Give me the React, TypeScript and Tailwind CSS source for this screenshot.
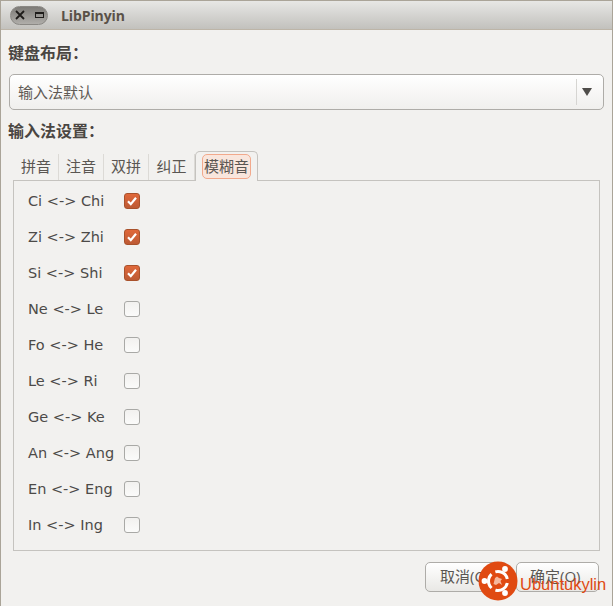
const CJK = "font-['Open_Sans','Noto_Sans_CJK_SC',sans-serif]";

const rows: [string, boolean][] = [
  ["Ci <-> Chi", true],
  ["Zi <-> Zhi", true],
  ["Si <-> Shi", true],
  ["Ne <-> Le", false],
  ["Fo <-> He", false],
  ["Le <-> Ri", false],
  ["Ge <-> Ke", false],
  ["An <-> Ang", false],
  ["En <-> Eng", false],
  ["In <-> Ing", false],
];

function Check({ on }: { on: boolean }) {
  if (on) {
    return (
      <div className="w-4 h-4 rounded-[3px] border border-[#a9512b] bg-gradient-to-b from-[#e0683a] to-[#bd5a34] flex items-center justify-center">
        <svg width="12" height="12" viewBox="0 0 12 12">
          <path d="M2 6.2 L4.8 9.2 L10 2.8" fill="none" stroke="#fff" strokeWidth="2.2" />
        </svg>
      </div>
    );
  }
  return <div className="w-4 h-4 rounded-[3px] border border-[#a9a9a6] bg-gradient-to-b from-[#f2f1ef] to-[#fbfbfa]" />;
}

function Tab({ label, w }: { label: string; w: string }) {
  return (
    <div className={`${w} h-[26px] pb-[2px] flex items-center justify-center border-r border-[#dcdad6] text-[15px] text-[#5a5652]`}>
      {label}
    </div>
  );
}

function Logo() {
  return (
    <svg width="40" height="40" viewBox="0 0 40 40">
      <circle cx="20" cy="20" r="19.5" fill="#e04a12" />
      <circle cx="20" cy="20" r="9.5" fill="none" stroke="#fff" strokeWidth="3" strokeDasharray="15.5 4.4" transform="rotate(12 20 20)" />
      <circle cx="6.5" cy="20" r="2.9" fill="#fff" />
      <circle cx="27" cy="8" r="2.9" fill="#fff" />
      <circle cx="27" cy="32" r="2.9" fill="#fff" />
      <path d="M15.5 23 L17 17 L19 15.5 L21 17 L24 18 L22.5 20 L24 24 L21 22 L18 24 Z" fill="#f5b79c" />
    </svg>
  );
}

export default function App() {
  return (
    <div className={`relative w-[613px] h-[606px] overflow-hidden flex flex-col bg-[#f2f1ef] border-l border-t border-r border-[#aaa498] ${CJK}`}>
      <div className="h-[29px] shrink-0 flex items-center bg-gradient-to-b from-[#e7e7e5] to-[#c2c1bd] border-b border-[#bdb5a8]">
        <div className="ml-[9px] w-[38px] h-[19px] rounded-full bg-gradient-to-b from-[#7d7b77] to-[#b0aeaa] border border-[#8a8884] flex items-center justify-between pl-[4px] pr-[3px]">
          <svg width="10" height="10" viewBox="0 0 10 10">
            <path d="M1 1 L9 9 M9 1 L1 9" stroke="#1e1c1a" strokeWidth="1.8" />
          </svg>
          <div className="w-[9px] h-[6px] border border-[#1e1c1a] border-t-2" />
        </div>
        <span className="ml-[13px] text-[14px] font-bold text-[#5a5148] tracking-[-0.1px]">LibPinyin</span>
      </div>

      <div className="flex-1 flex flex-col px-[7px]">
        <div className="mt-[11px] h-[24px] flex items-center text-[16px] font-bold text-[#4a4642]">键盘布局：</div>

        <div className="mt-[9px] ml-[1px] h-[36px] w-[595px] rounded-[5px] border border-[#aeaca8] bg-gradient-to-b from-[#ffffff] to-[#f0efed] flex items-center">
          <span className="ml-[8px] flex-1 text-[15px] text-[#5f5a55]">输入法默认</span>
          <div className="w-px h-[26px] bg-[#d6d5d2]" />
          <svg className="ml-[5px] mr-[11px]" width="10" height="8" viewBox="0 0 10 8">
            <path d="M0 0 H10 L5 8 Z" fill="#4f4d4a" />
          </svg>
        </div>

        <div className="mt-[9px] h-[24px] flex items-center text-[16px] font-bold text-[#4a4642]">输入法设置：</div>

        <div className="mt-[8px] ml-[6px] h-[29px] flex items-end relative z-10">
          <Tab label="拼音" w="w-[45px]" />
          <Tab label="注音" w="w-[45px]" />
          <Tab label="双拼" w="w-[45px]" />
          <Tab label="纠正" w="w-[46px]" />
          <div className="w-[63px] h-[30px] -mb-px rounded-t-[5px] border border-b-0 border-[#c5c3bf] bg-[#f2f1ef] flex items-center pl-[6px]">
            <div className="w-[49px] h-[25px] rounded-[5px] border border-[#f2a98c] bg-[#f9e6dd] flex items-center justify-center text-[15px] text-[#5a5652]">
              模糊音
            </div>
          </div>
        </div>

        <div className="ml-[5px] w-[587px] h-[371px] border border-[#c5c3bf] bg-[#f2f1ef] flex flex-col pt-[2px] pl-[14px]">
          {rows.map(([label, on]) => (
            <div key={label} className="h-[36px] flex items-center">
              <span className="w-[96px] pt-px text-[14.5px] text-[#4c4a48] font-['DejaVu_Sans',sans-serif]">{label}</span>
              <Check on={on} />
            </div>
          ))}
        </div>

        <div className="mt-[11px] flex gap-[8px] ml-[417px]">
          <div className="w-[83px] h-[30px] pb-[2px] rounded-[5px] border border-[#aeaca8] bg-gradient-to-b from-[#ffffff] to-[#e9e8e5] flex items-center pl-[14px] text-[15px] text-[#5a5652]">
            取消(C)
          </div>
          <div className="w-[83px] h-[30px] pb-[2px] rounded-[5px] border border-[#aeaca8] bg-gradient-to-b from-[#ffffff] to-[#e9e8e5] flex items-center pl-[13px] text-[15px] text-[#5a5652]">
            确定(O)
          </div>
        </div>
      </div>

      <div className="absolute left-[477px] top-[560px]">
        <Logo />
      </div>
      <span className="absolute left-[519px] top-[572px] text-[16.5px] leading-[22px] text-[#e04a12] font-['Liberation_Sans',sans-serif]">Ubuntukylin</span>
    </div>
  );
}
